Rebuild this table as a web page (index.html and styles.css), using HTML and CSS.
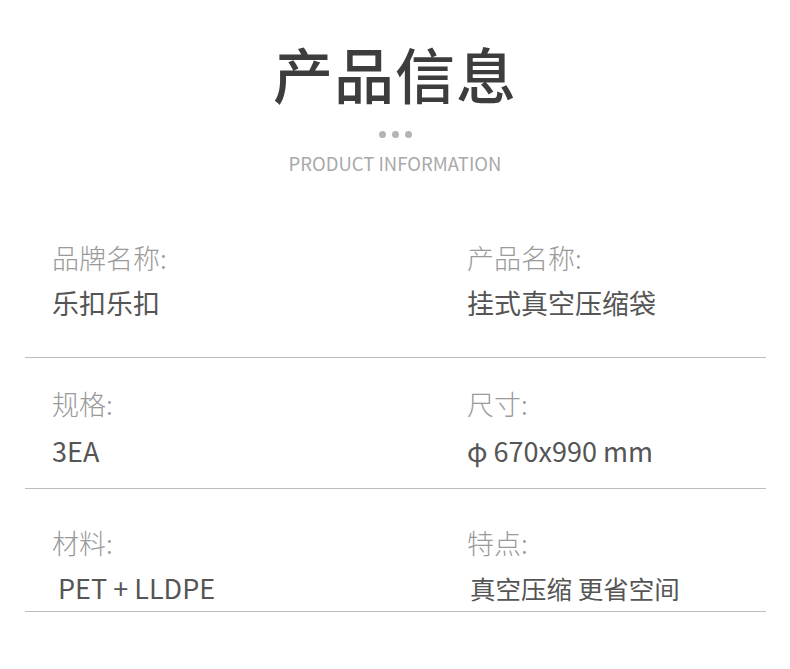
FILE: index.html
```html
<!DOCTYPE html>
<html lang="zh">
<head>
<meta charset="utf-8">
<link rel="stylesheet" href="styles.css">
</head>
<body>
<div class="page">
  <header class="head">
    <h1 class="title">产品信息</h1>
    <div class="dots"><span></span><span></span><span></span></div>
    <p class="subtitle">PRODUCT INFORMATION</p>
  </header>
  <section class="table">
    <div class="row row-1">
      <div class="cell"><div class="label">品牌名称:</div><div class="value">乐扣乐扣</div></div>
      <div class="cell"><div class="label">产品名称:</div><div class="value">挂式真空压缩袋</div></div>
    </div>
    <div class="row row-2">
      <div class="cell"><div class="label">规格:</div><div class="value">3EA</div></div>
      <div class="cell"><div class="label">尺寸:</div><div class="value">φ 670x990 mm</div></div>
    </div>
    <div class="row row-3">
      <div class="cell"><div class="label">材料:</div><div class="value value-indent">PET + LLDPE</div></div>
      <div class="cell"><div class="label">特点:</div><div class="value value-nudge">真空压缩 更省空间</div></div>
    </div>
  </section>
</div>
</body>
</html>
```
FILE: styles.css
```css
html, body {
  margin: 0;
  padding: 0;
  background: #ffffff;
}
body {
  font-family: "Noto Sans CJK SC", "Noto Sans", sans-serif;
  width: 790px;
  height: 669px;
  overflow: hidden;
}
.page {
  padding-top: 30px;
}
.head {
  display: flex;
  flex-direction: column;
  align-items: center;
}
.title {
  margin: 0;
  font-size: 60px;
  line-height: 86px;
  font-weight: 500;
  color: #3d3d3d;
  letter-spacing: 1px;
}
.dots {
  display: flex;
  gap: 6px;
  margin-top: 15px;
}
.dots span {
  width: 7px;
  height: 7px;
  border-radius: 50%;
  background: #b4b4b4;
}
.subtitle {
  margin: 12px 0 0;
  font-size: 18.5px;
  line-height: 26px;
  color: #a9a9a9;
}
.table {
  margin: 63px 0 0 25px;
  width: 741px;
}
.row {
  display: grid;
  grid-template-columns: 415px 1fr;
  border-bottom: 1px solid #bdbdbd;
}
.cell {
  padding-left: 27px;
}
.label {
  font-size: 27px;
  line-height: 38px;
  font-weight: 300;
  color: #9a9a9a;
}
.value {
  font-size: 27px;
  line-height: 38px;
  margin-top: 7px;
  color: #555555;
}
.row-2 .value {
  margin-top: 9px;
}
.value-indent {
  padding-left: 6px;
}
.value-nudge {
  padding-left: 3px;
  font-size: 25.5px;
}
.row-1 { padding-bottom: 35px; }
.row-2 { padding-top: 27px; padding-bottom: 18px; }
.row-3 { padding-top: 35px; padding-bottom: 4px; }
```
